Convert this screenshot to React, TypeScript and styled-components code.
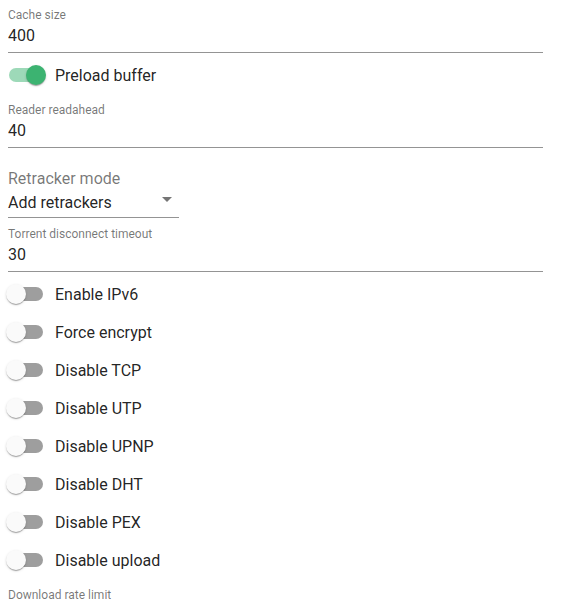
import React, { useState } from "react";
import styled, { createGlobalStyle } from "styled-components";

const GlobalStyle = createGlobalStyle`
  html, body {
    margin: 0;
    padding: 0;
    background: #ffffff;
  }
  body {
    font-family: Roboto, "Liberation Sans", Arial, sans-serif;
    color: rgba(0, 0, 0, 0.87);
  }
`;

const Page = styled.div`
  display: flex;
  flex-direction: column;
  width: 535px;
  margin-left: 8px;
`;

const Field = styled.div`
  display: flex;
  flex-direction: column;
  padding-top: 8px;
  margin-top: 1px;

  &:first-child {
    margin-top: 0;
  }
`;

const SmallLabel = styled.label`
  font-size: 12px;
  line-height: 14px;
  color: rgba(0, 0, 0, 0.54);
`;

const Input = styled.input`
  font-family: inherit;
  font-size: 16px;
  line-height: 19px;
  height: 19px;
  padding: 4px 0 7px;
  margin: 0;
  border: none;
  border-bottom: 1px solid rgba(0, 0, 0, 0.42);
  outline: none;
  background: transparent;
  color: rgba(0, 0, 0, 0.87);
  box-sizing: content-box;
  width: 100%;
`;

const SwitchRow = styled.label<{ $first?: boolean }>`
  display: flex;
  align-items: center;
  height: 38px;
  margin-top: ${(p) => (p.$first ? "3px" : "0")};
  cursor: pointer;
`;

const SwitchRoot = styled.span`
  position: relative;
  display: inline-flex;
  flex-shrink: 0;
  width: 58px;
  height: 38px;
  padding: 12px;
  box-sizing: border-box;
  margin-left: -11px;
`;

const Track = styled.span<{ $on: boolean }>`
  width: 100%;
  height: 100%;
  border-radius: 7px;
  background: ${(p) => (p.$on ? "#3cb371" : "#000000")};
  opacity: ${(p) => (p.$on ? 0.5 : 0.38)};
`;

const Thumb = styled.span<{ $on: boolean }>`
  position: absolute;
  top: 9px;
  left: 9px;
  width: 20px;
  height: 20px;
  border-radius: 50%;
  background: ${(p) => (p.$on ? "#3cb371" : "#fafafa")};
  transform: translateX(${(p) => (p.$on ? "20px" : "0")});
  box-shadow: 0px 2px 1px -1px rgba(0, 0, 0, 0.2),
    0px 1px 1px 0px rgba(0, 0, 0, 0.14), 0px 1px 3px 0px rgba(0, 0, 0, 0.12);
`;

const SwitchText = styled.span`
  font-size: 16px;
  line-height: 24px;
  padding-top: 2px;
  color: rgba(0, 0, 0, 0.87);
`;

const SelectGroup = styled.div`
  display: flex;
  flex-direction: column;
  align-items: flex-start;
  margin-top: 21px;
`;

const SelectLabel = styled.span`
  font-size: 16px;
  line-height: 19px;
  color: rgba(0, 0, 0, 0.54);
`;

const SelectBox = styled.div`
  position: relative;
  width: 171px;
  padding: 5px 0;
  font-size: 16px;
  line-height: 19px;
  border-bottom: 1px solid rgba(0, 0, 0, 0.42);
  color: rgba(0, 0, 0, 0.87);
`;

const DropIcon = styled.svg`
  position: absolute;
  right: 0;
  top: -1px;
  width: 24px;
  height: 24px;
  fill: rgba(0, 0, 0, 0.54);
`;

const Toggle: React.FC<{ label: string; initial?: boolean; first?: boolean }> = ({
  label,
  initial = false,
  first,
}) => {
  const [on, setOn] = useState(initial);
  return (
    <SwitchRow $first={first} onClick={() => setOn(!on)}>
      <SwitchRoot>
        <Track $on={on} />
        <Thumb $on={on} />
      </SwitchRoot>
      <SwitchText>{label}</SwitchText>
    </SwitchRow>
  );
};

const TextField: React.FC<{ label: string; value: string }> = ({ label, value }) => {
  const [val, setVal] = useState(value);
  return (
    <Field>
      <SmallLabel>{label}</SmallLabel>
      <Input value={val} onChange={(e) => setVal(e.target.value)} />
    </Field>
  );
};

const switches = [
  "Enable IPv6",
  "Force encrypt",
  "Disable TCP",
  "Disable UTP",
  "Disable UPNP",
  "Disable DHT",
  "Disable PEX",
  "Disable upload",
];

export default function App() {
  return (
    <>
      <GlobalStyle />
      <Page>
        <TextField label="Cache size" value="400" />
        <Toggle label="Preload buffer" initial first />
        <TextField label="Reader readahead" value="40" />
        <SelectGroup>
          <SelectLabel>Retracker mode</SelectLabel>
          <SelectBox>
            Add retrackers
            <DropIcon viewBox="0 0 24 24">
              <path d="M7 10l5 5 5-5z" />
            </DropIcon>
          </SelectBox>
        </SelectGroup>
        <TextField label="Torrent disconnect timeout" value="30" />
        {switches.map((s, i) => (
          <Toggle key={s} label={s} first={i === 0} />
        ))}
        <TextField label="Download rate limit" value="0" />
      </Page>
    </>
  );
}
